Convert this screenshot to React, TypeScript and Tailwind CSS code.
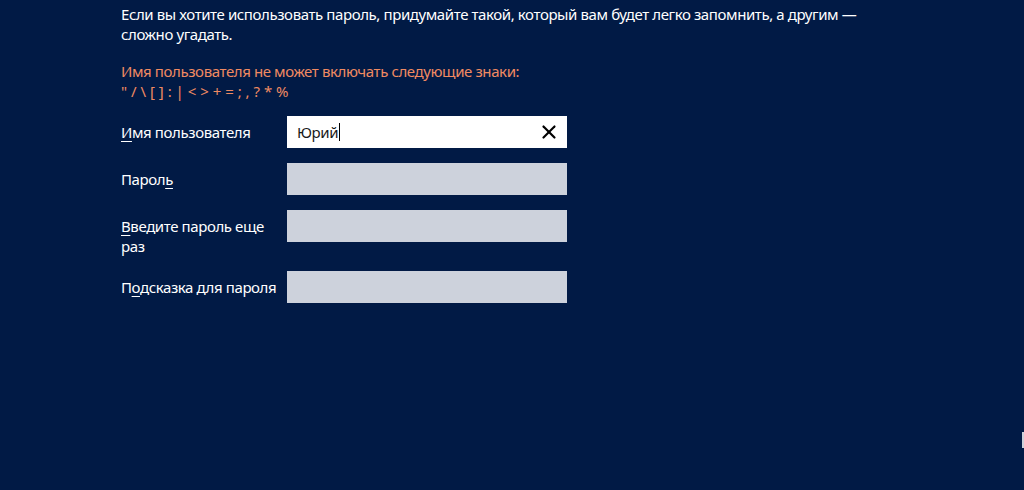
import { X } from 'lucide-react'

const font = { fontFamily: '"Noto Sans", "Open Sans", sans-serif' }

function Label({ text, u }: { text: string; u: number }) {
  return (
    <span>
      {text.slice(0, u)}
      <span className="underline underline-offset-[3px]">{text[u]}</span>
      {text.slice(u + 1)}
    </span>
  )
}

function Row({ label, children }: { label: React.ReactNode; children: React.ReactNode }) {
  return (
    <div className="flex items-start">
      <div className="w-[166px] pt-[6px] text-[15px] leading-5 tracking-[-0.4px] text-white">{label}</div>
      {children}
    </div>
  )
}

export default function App() {
  return (
    <div
      className="relative h-[490px] w-full overflow-hidden bg-[#011a45] pl-[121px] pt-[4px]"
      style={font}
    >
      <p className="whitespace-nowrap text-[15px] leading-5 tracking-[-0.4px] text-white">
        Если вы хотите использовать пароль, придумайте такой, который вам будет легко запомнить, а другим —
        <br />
        сложно угадать.
      </p>
      <p className="mt-[17px] whitespace-nowrap text-[15px] leading-5 tracking-[-0.4px] text-[#f08a62]">
        Имя пользователя не может включать следующие знаки:
        <br />
        <span className="tracking-[0px]">&quot; / \ [ ] : | &lt; &gt; + = ; , ? * %</span>
      </p>

      <div className="mt-[15px] flex flex-col gap-[15px]">
        <Row label={<Label text="Имя пользователя" u={0} />}>
          <div className="flex h-8 w-[280px] items-center bg-white pl-[10px] pr-[7px]">
            <span className="text-[15px] tracking-[-0.4px] text-[#1a1a1a]">Юрий</span>
            <span className="ml-[1px] h-[18px] w-px bg-black" />
            <X className="ml-auto h-[22px] w-[22px] text-black" strokeWidth={2.4} />
          </div>
        </Row>
        <Row label={<Label text="Пароль" u={5} />}>
          <div className="h-8 w-[280px] bg-[#cdd2dc]" />
        </Row>
        <Row
          label={
            <span>
              <span className="underline underline-offset-[3px]">В</span>ведите пароль еще
              <br />
              раз
            </span>
          }
        >
          <div className="h-8 w-[280px] bg-[#cdd2dc]" />
        </Row>
        <Row label={<span className="whitespace-nowrap"><Label text="Подсказка для пароля" u={1} /></span>}>
          <div className="h-8 w-[280px] bg-[#cdd2dc]" />
        </Row>
      </div>

      <div className="absolute right-0 top-[432px] h-[16px] w-[2px] bg-white/80" />
    </div>
  )
}
